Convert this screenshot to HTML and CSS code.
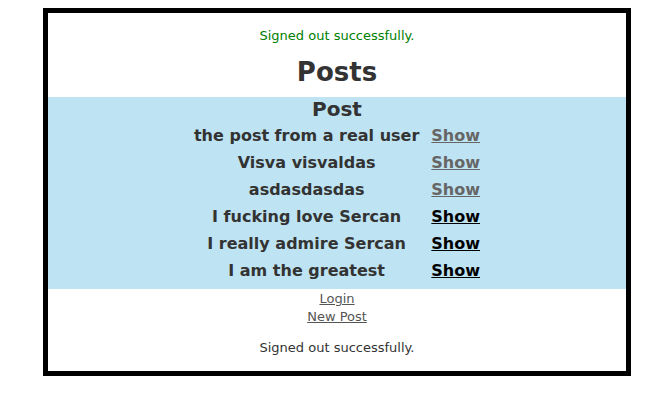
FILE: index.html
```html
<!DOCTYPE html>
<html>
<head>
<meta charset="utf-8">
<link rel="stylesheet" href="styles.css">
</head>
<body>
<div class="frame">
  <p class="notice">Signed out successfully.</p>
  <h1 class="title">Posts</h1>
  <div class="band">
    <h2 class="subtitle">Post</h2>
    <table class="posts">
      <tr><td class="name">the post from a real user</td><td class="act"><a class="show visited" href="#">Show</a></td></tr>
      <tr><td class="name">Visva visvaldas</td><td class="act"><a class="show visited" href="#">Show</a></td></tr>
      <tr><td class="name">asdasdasdas</td><td class="act"><a class="show visited" href="#">Show</a></td></tr>
      <tr><td class="name">I fucking love Sercan</td><td class="act"><a class="show" href="#">Show</a></td></tr>
      <tr><td class="name">I really admire Sercan</td><td class="act"><a class="show" href="#">Show</a></td></tr>
      <tr><td class="name">I am the greatest</td><td class="act"><a class="show" href="#">Show</a></td></tr>
    </table>
  </div>
  <div class="links">
    <a class="link" href="#">Login</a>
    <a class="link" href="#">New Post</a>
  </div>
  <p class="alert">Signed out successfully.</p>
</div>
</body>
</html>
```
FILE: styles.css
```css
html, body { margin: 0; padding: 0; background: #fff; }
body { padding: 8px 0 0 43px; font-family: "DejaVu Sans", Verdana, sans-serif; color: #333; }
.frame {
  width: 578px;
  border: 5px solid #000;
  text-align: center;
}
.notice { margin: 14px 0 0; font-size: 13px; line-height: 18px; color: #008000; }
.title { margin: 7px 0 0; font-size: 26px; line-height: 40px; font-weight: bold; color: #333; }
.band { background: #bee3f2; margin-top: 5px; padding: 0 0 5px; }
.subtitle { margin: 0; font-size: 20px; line-height: 24px; font-weight: bold; }
.posts { margin: 1px auto 0; border-collapse: collapse; }
.posts td { padding: 0 6px; height: 27px; font-size: 16px; font-weight: bold; text-align: center; }
.posts td.act { padding-left: 6px; }
.show { color: #000; text-decoration: underline; }
.show.visited { color: #666; }
.links { display: flex; flex-direction: column; align-items: center; padding-top: 1px; }
.link { font-size: 13px; line-height: 18px; color: #555; }
.alert { margin: 13px 0 14px; font-size: 13px; line-height: 18px; color: #333; }
```
